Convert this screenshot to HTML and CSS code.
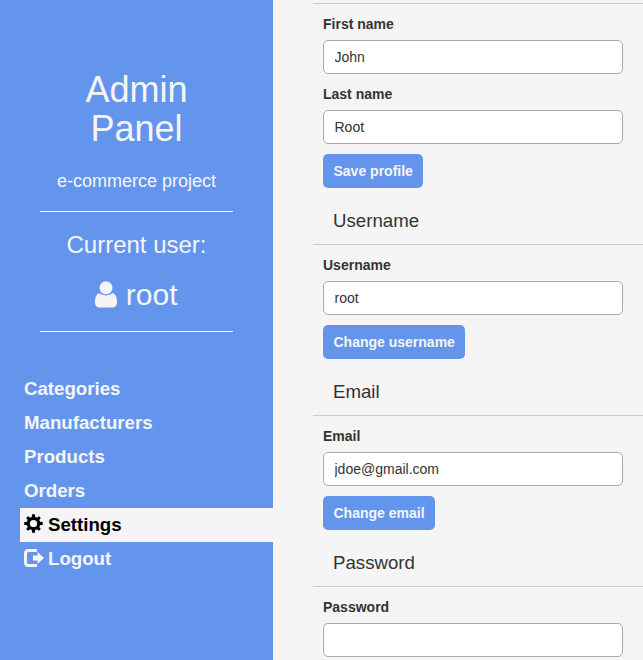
FILE: index.html
```html
<!DOCTYPE html>
<html lang="en">
<head>
<meta charset="utf-8">
<title>Admin Panel</title>
<link rel="stylesheet" href="styles.css">
</head>
<body>
<aside class="sidebar">
  <header class="brand">
    <h1>Admin Panel</h1>
    <p class="tagline">e-commerce project</p>
    <div class="user">
      <h3>Current user:</h3>
      <h2><svg class="icon-user" viewBox="0 0 22 27" aria-hidden="true"><path d="M4.7 12.2C6 13.5 8.500 14.400 11 14.400S16 13.500 17.300 12.200C20.700 12.500 22 16.200 22 21.500C22 24.800 20 26.500 17.300 26.500H4.700C2 26.500 0 24.800 0 21.500C0 16.200 1.300 12.500 4.700 12.200Z"/><circle cx="11" cy="6.800" r="6.500"/></svg> root</h2>
    </div>
  </header>
  <nav class="menu">
    <a href="#">Categories</a>
    <a href="#">Manufacturers</a>
    <a href="#">Products</a>
    <a href="#">Orders</a>
    <a href="#" class="active"><svg class="icon-cog" viewBox="0 0 20 20" aria-hidden="true"><circle cx="10" cy="10" r="5.500" fill="none" stroke="currentColor" stroke-width="3.400"/><path d="M8.100 4 8.500 .300h3l.4 3.700zM8.100 16l.4 3.700h3l.4-3.700zM4 8.100.300 8.500v3l3.700.4zM16 8.100l3.700.4v3l-3.700.4zM4.600 7.200 2.300 4.300 4.300 2.300 7.200 4.600zM12.800 4.600l2.900-2.300L17.700 4.300 15.400 7.200zM4.600 12.800l-2.300 2.900 2 2 2.900-2.300zM15.400 12.800l2.300 2.900-2 2-2.900-2.300z"/></svg><span>Settings</span></a>
    <a href="#"><svg class="icon-out" viewBox="0 0 20 18" aria-hidden="true"><path d="M13 1.500H4.500Q1.500 1.500 1.500 4.500V13.500Q1.500 16.500 4.500 16.500H13" fill="none" stroke="currentColor" stroke-width="3"/><path d="M9 6.500h4.500V3L20 9l-6.500 6v-3.500H9z"/></svg><span>Logout</span></a>
  </nav>
</aside>
<main class="content">
  <section>
    <form>
      <label for="first">First name</label>
      <input id="first" type="text" value="John">
      <label for="last">Last name</label>
      <input id="last" type="text" value="Root">
      <button type="button">Save profile</button>
    </form>
  </section>
  <h4>Username</h4>
  <section>
    <form>
      <label for="username">Username</label>
      <input id="username" type="text" value="root">
      <button type="button">Change username</button>
    </form>
  </section>
  <h4>Email</h4>
  <section>
    <form>
      <label for="email">Email</label>
      <input id="email" type="text" value="jdoe@gmail.com">
      <button type="button">Change email</button>
    </form>
  </section>
  <h4>Password</h4>
  <section>
    <form>
      <label for="password">Password</label>
      <input id="password" type="password">
    </form>
  </section>
</main>
</body>
</html>
```
FILE: styles.css
```css
* { box-sizing: border-box; }

body {
  margin: 0;
  height: 660px;
  display: flex;
  overflow: hidden;
  background: #f5f5f5;
  color: #333;
  font: 14px/20px "Liberation Sans", Arial, sans-serif;
}

svg { fill: currentColor; }

.sidebar {
  width: 273px;
  height: 660px;
  flex: none;
  padding: 70px 0 0 20px;
  background: #6495ed;
  color: #f5f5f5;
}

.brand {
  width: 193px;
  margin-left: 20px;
  text-align: center;
}

h1, h2, h3, h4, p { margin: 0; font-weight: 400; }

h1 {
  padding: 0 30px;
  font-size: 36px;
  line-height: 39px;
}

.tagline {
  margin-top: 20px;
  font-size: 18px;
  line-height: 26px;
}

.user {
  height: 121px;
  margin-top: 17px;
  padding-top: 20px;
  border-top: 1px solid #f5f5f5;
  border-bottom: 1px solid #f5f5f5;
}

h3 { font-size: 24px; line-height: 26px; }
h2 { margin-top: 20px; font-size: 30px; line-height: 33px; }

.icon-user { width: 22px; height: 27px; vertical-align: -3px; }

.menu { margin-top: 40px; }

.menu a {
  display: flex;
  align-items: center;
  height: 34px;
  padding-left: 4px;
  color: inherit;
  font-size: 18.66px;
  font-weight: 700;
  text-decoration: none;
}

.menu .active { background: #f5f5f5; color: #000; }
.icon-cog { width: 19px; height: 19px; margin: -3px 5px 0 0; }
.icon-out { width: 20px; height: 18px; margin: -2px 4px 0 0; }

.content {
  width: 330px;
  flex: none;
  margin-left: 40px;
  padding-top: 3px;
}

section {
  padding: 10px 20px 0 10px;
  border-top: 1px solid #ccc;
}

label {
  display: block;
  height: 21px;
  margin-bottom: 5px;
  font-weight: 700;
}

input {
  display: block;
  width: 300px;
  height: 34px;
  margin-bottom: 10px;
  padding: 6px 10.5px;
  border: 1px solid #aaa;
  border-radius: 5px;
  background: #fff;
  color: #333;
  font: inherit;
}

button {
  display: block;
  height: 34px;
  padding: 0 10.5px;
  border: 0;
  border-radius: 5px;
  background: #6495ed;
  color: #f5f5f5;
  font: inherit;
  font-weight: 700;
}

h4 {
  height: 56px;
  padding: 23px 0 0 20px;
  font-size: 18.66px;
}
```
